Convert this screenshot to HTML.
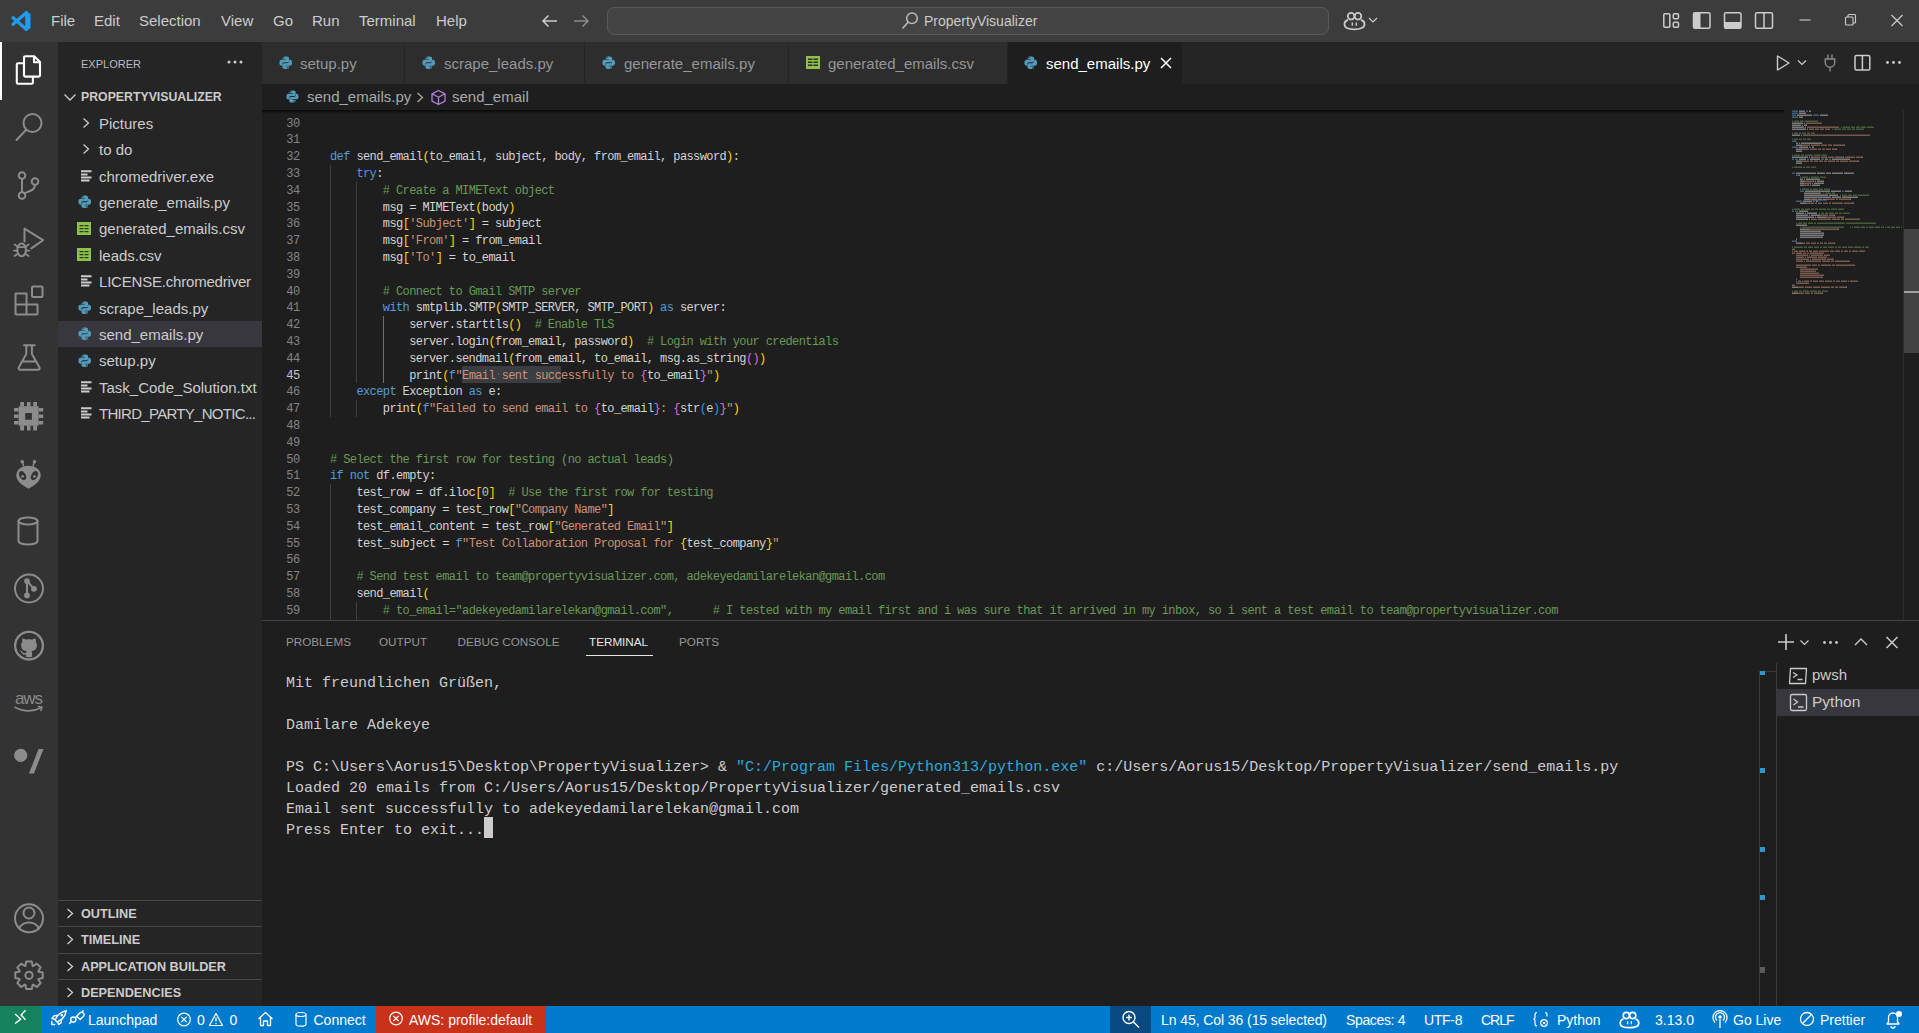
<!DOCTYPE html>
<html><head><meta charset="utf-8">
<style>
*{margin:0;padding:0;box-sizing:border-box}
html,body{width:1919px;height:1033px;overflow:hidden;background:#1e1e1e;font-family:"Liberation Sans",sans-serif;color:#cccccc}
.abs{position:absolute}
#title{left:0;top:0;width:1919px;height:42px;background:#3c3c3c}
#act{left:0;top:42px;width:58px;height:964px;background:#333333}
#side{left:58px;top:42px;width:204px;height:964px;background:#252526}
#tabs{left:262px;top:42px;width:1657px;height:42px;background:#252526}
#crumb{left:262px;top:84px;width:1657px;height:26px;background:#1e1e1e}
#editor{left:262px;top:110px;width:1657px;height:510px;background:#1e1e1e;overflow:hidden}
#panel{left:262px;top:620px;width:1657px;height:386px;background:#1e1e1e;border-top:1px solid #444}
#status{left:0;top:1006px;width:1919px;height:27px;background:#007acc;color:#fff}
.menu{font-size:15px;color:#cccccc;top:12px}
.tab{top:0;height:42px;background:#2d2d2d;border-right:1px solid #252526}
.tab .t{position:absolute;top:12.8px;font-size:15px;color:#969696;white-space:pre}
.code{font-family:"Liberation Mono",monospace;font-size:12px;letter-spacing:-0.6px;line-height:16.8px;white-space:pre;color:#d4d4d4}
.ln{font-family:"Liberation Mono",monospace;font-size:12px;letter-spacing:-0.6px;line-height:16.8px;color:#858585;text-align:right;white-space:pre}
.k{color:#569cd6}.c{color:#6a9955}.s{color:#ce9178}.n{color:#b5cea8}
.b1{color:#ffd700}.b2{color:#da70d6}.b3{color:#179fff}
.row{position:absolute;left:0;width:204px;height:26px;font-size:15px;color:#cccccc;white-space:pre}
.row .t{position:absolute;left:41px;top:4px}
.term{font-family:"Liberation Mono",monospace;font-size:15px;line-height:21px;white-space:pre;color:#cccccc}
.ptab{position:absolute;top:14px;font-size:11.7px;color:#969696;white-space:pre}
.st{position:absolute;top:6px;font-size:14px;color:#fff;white-space:pre}
</style></head><body>

<div id="title" class="abs">
  <svg class="abs" style="left:10px;top:10px" width="22" height="22" viewBox="0 0 22 22">
    <path d="M16.5 2.5 L3 14.3 M16.5 19.5 L3 7.7" stroke="#1f9cf0" stroke-width="3.2" stroke-linecap="round" fill="none"/>
    <path fill="#1f9cf0" d="M15.2 1.2 L20.5 3.7 V18.3 L15.2 20.8 Z"/>
  </svg>
  <span class="abs menu" style="left:51px">File</span>
  <span class="abs menu" style="left:94px">Edit</span>
  <span class="abs menu" style="left:139px">Selection</span>
  <span class="abs menu" style="left:221px">View</span>
  <span class="abs menu" style="left:273px">Go</span>
  <span class="abs menu" style="left:312px">Run</span>
  <span class="abs menu" style="left:359px">Terminal</span>
  <span class="abs menu" style="left:436px">Help</span>
  <svg class="abs" style="left:538px;top:12px" width="52" height="18" viewBox="0 0 52 18">
    <path d="M19 9 H5 M10.5 3.5 L5 9 L10.5 14.5" stroke="#cccccc" stroke-width="1.5" fill="none"/>
    <path d="M36 9 H50 M44.5 3.5 L50 9 L44.5 14.5" stroke="#8a8a8a" stroke-width="1.5" fill="none"/>
  </svg>
  <div class="abs" style="left:607px;top:7px;width:722px;height:28px;border:1px solid #585858;border-radius:7px;background:#444444"></div>
  <svg class="abs" style="left:900px;top:11px" width="20" height="20" viewBox="0 0 20 20">
    <circle cx="12" cy="7.2" r="5.3" stroke="#bbbbbb" stroke-width="1.5" fill="none"/>
    <path d="M8.3 11 L2.5 17.5" stroke="#bbbbbb" stroke-width="1.6" fill="none"/>
  </svg>
  <span class="abs" style="left:924px;top:13px;font-size:14px;color:#cccccc">PropertyVisualizer</span>
  <svg class="abs" style="left:1342px;top:6px" width="40" height="26" viewBox="0 0 40 26">
    <g stroke="#cccccc" fill="none">
      <circle cx="9.1" cy="10.2" r="3.3" stroke-width="1.7"/>
      <circle cx="16" cy="10.2" r="3.3" stroke-width="1.7"/>
      <path d="M6 14 c-2.5 .5 -3.5 2.5 -3.5 4.5 c0 3 4 4.8 10 4.8 s10 -1.8 10 -4.8 c0 -2 -1 -4 -3.5 -4.5" stroke-width="1.8"/>
    </g>
    <path d="M9.6 16.5 h1.4 v3.2 h-1.4z M13.6 16.5 h1.4 v3.2 h-1.4z" fill="#cccccc"/>
    <path d="M27 12 L31 16 L35 12" stroke="#cccccc" stroke-width="1.2" fill="none"/>
  </svg>
  <svg class="abs" style="left:1660px;top:8px" width="250" height="26" viewBox="0 0 250 26">
    <g stroke="#cccccc" stroke-width="1.5" fill="none">
      <rect x="3.8" y="5.8" width="6" height="13.4" rx="1"/>
      <rect x="13.3" y="5.8" width="5.2" height="5" rx="1.2"/>
      <rect x="13.3" y="14.2" width="5.2" height="5" rx="1.2"/>
      <rect x="33.5" y="4.8" width="16.5" height="15.5" rx="1.5"/>
      <rect x="64.5" y="4.8" width="16.5" height="15.5" rx="1.5"/>
      <rect x="95.5" y="4.8" width="17" height="15.5" rx="1.5"/>
      <path d="M104 5 v15"/>
      <path d="M139.5 12 h11" stroke-width="1.1"/>
      <rect x="185.5" y="9" width="7.5" height="8" rx="1" stroke-width="1.1"/>
      <path d="M188 9 v-1.5 a1 1 0 0 1 1 -1 h5.5 a1 1 0 0 1 1 1 v6.5 a1 1 0 0 1 -1 1 h-1.5" stroke-width="1.1"/>
      <path d="M231.5 7 L242.5 18 M242.5 7 L231.5 18" stroke-width="1.2"/>
    </g>
    <rect x="33.5" y="4.8" width="7" height="15.5" fill="#cccccc"/>
    <rect x="64.5" y="14" width="16.5" height="6.3" fill="#cccccc"/>
  </svg>
</div>

<svg class="abs" style="left:0;top:0" width="58" height="1006" viewBox="0 0 58 1006">
<rect x="0" y="42" width="58" height="964" fill="#333333"/>
<rect x="0" y="42" width="2" height="58" fill="#ffffff"/>
<g fill="none" stroke="#ffffff" stroke-width="2.1" stroke-linejoin="round">
 <path d="M25.3 56.2 h8.9 l5.8 5.8 v13.3 a1.3 1.3 0 0 1 -1.3 1.3 h-13.4 a1.3 1.3 0 0 1 -1.3 -1.3 v-17.8 a1.3 1.3 0 0 1 1.3 -1.3z"/>
 <path d="M34 56.2 v6 h6"/>
 <path d="M24 63.2 h-5.9 a1.3 1.3 0 0 0 -1.3 1.3 v18 a1.3 1.3 0 0 0 1.3 1.3 h13.5 a1.3 1.3 0 0 0 1.3 -1.3 v-5.6"/>
</g>
<g fill="none" stroke="#8c8c8c" stroke-width="2" stroke-linecap="round" stroke-linejoin="round">
 <!-- search -->
 <circle cx="32.5" cy="123" r="9"/>
 <path d="M26 130 L16.5 140"/>
 <!-- scm -->
 <circle cx="22" cy="175.5" r="3.3"/>
 <circle cx="22" cy="195.5" r="3.3"/>
 <circle cx="35" cy="181.5" r="3.3"/>
 <path d="M22 179 v13"/>
 <path d="M35 185 c0 5 -5 6 -10 8"/>
 <!-- run debug -->
 <path d="M24.5 241.4 V228.6 L43 240.2 L31.3 248.4"/>
 <ellipse cx="21.6" cy="249.9" rx="4.3" ry="6.3"/>
 <path d="M17.3 247.2 H25.9 M14.5 244.5 L17.6 246.5 M14 250.6 H17.3 M14.5 256 L17.6 254 M28.7 244.5 L25.6 246.5 M29.2 250.6 H25.9 M28.7 256 L25.6 254" stroke-width="1.7"/>
 <!-- extensions -->
 <path d="M15.5 293.5 h11 v11 h11 v9 a1 1 0 0 1 -1 1 h-20 a1 1 0 0 1 -1 -1 z M15.5 304.5 h11 v10 M26.5 304.5 v-11"/>
 <rect x="32" y="286.5" width="10.5" height="10.5" rx="1"/>
 <!-- flask -->
 <path d="M24 345.3 h10.8 M26.3 345.3 v8.7 l-7.6 13.5 a1.5 1.5 0 0 0 1.3 2.2 h18.2 a1.5 1.5 0 0 0 1.3 -2.2 l-7.6 -13.5 v-8.7 M23.4 361.4 h11.6"/>
 <!-- db -->
 <ellipse cx="28" cy="521" rx="9.5" ry="3.5"/>
 <path d="M18.5 521 v20 c0 2 4.2 3.5 9.5 3.5 s9.5 -1.5 9.5 -3.5 v-20"/>
 <!-- git graph circle -->
 <circle cx="29" cy="588.5" r="14"/>
 <circle cx="29" cy="594" r="13" stroke="none"/>
 <!-- github circle -->
 <circle cx="29" cy="645.7" r="13.8" stroke-width="2.4"/>
 <!-- account -->
 <circle cx="29" cy="918.3" r="14"/>
 <circle cx="29" cy="913" r="5.5"/>
 <path d="M19 928.5 c2 -4 5.5 -6 10 -6 s8 2 10 6"/>
 <!-- gear -->
 <circle cx="29" cy="975.3" r="3.6"/>
</g>
<g fill="#8c8c8c">
 <!-- chip -->
 <path fill-rule="evenodd" d="M18.6 406.2 h20 v19.5 h-20z M25.2 413 v6.8 h6.7 v-6.8z"/>
 <path d="M20.2 402 h3.8 v4.5 h-3.8z M27 402 h3.5 v4.5 h-3.5z M33.2 402 h3.8 v4.5 h-3.8z M20.2 425.5 h3.8 v5 h-3.8z M27 425.5 h3.5 v5 h-3.5z M33.2 425.5 h3.8 v5 h-3.8z M14 408 h4.6 v3.5 h-4.6z M14 414.6 h4.6 v3.5 h-4.6z M14 421 h4.6 v3.5 h-4.6z M38.6 408 h4.6 v3.5 h-4.6z M38.6 414.6 h4.6 v3.5 h-4.6z M38.6 421 h4.6 v3.5 h-4.6z"/>
 <!-- alien -->
 <path d="M28.5 465.7 C35.5 465.7 40.7 469.5 40.7 475.5 C40.7 481 34 486 28.5 488.7 C23 486 16.3 481 16.3 475.5 C16.3 469.5 21.5 465.7 28.5 465.7Z"/>
 <circle cx="22.2" cy="461.8" r="1.8"/><circle cx="34.5" cy="461.8" r="1.8"/>
 <!-- slash logo -->
 <circle cx="20.7" cy="755.4" r="6.6"/>
 <path d="M38.5 749 h5 l-9.5 24.5 h-5z"/>
</g>
<g stroke="#8c8c8c" stroke-width="1.5" fill="none">
 <path d="M22.5 462 L23.8 466.5 M34.2 462 L33 466.5"/>
</g>
<g fill="#333333">
 <ellipse cx="22.6" cy="475.6" rx="3.1" ry="4.8" transform="rotate(-28 22.6 475.6)"/>
 <ellipse cx="34.4" cy="475.6" rx="3.1" ry="4.8" transform="rotate(28 34.4 475.6)"/>
</g><g fill="#8c8c8c">
 <circle cx="22.6" cy="476.4" r="1.3"/><circle cx="34.4" cy="476.4" r="1.3"/>
</g>
<!-- git graph inner -->
<g stroke="#8c8c8c" stroke-width="2" fill="none" stroke-linecap="round">
 <path d="M27 581 V595.5 M27 581 L34 588.8"/>
</g>
<g fill="#8c8c8c"><circle cx="27" cy="581.1" r="2.9"/><circle cx="27" cy="595.4" r="2.9"/><circle cx="34" cy="588.8" r="2.9"/></g>
<!-- github cat -->
<g transform="translate(16.6 633.3) scale(1.55)"><circle cx="8" cy="8" r="7.4" fill="#8c8c8c"/><path fill="#333333" d="M8 0C3.58 0 0 3.58 0 8c0 3.54 2.29 6.53 5.47 7.59.4.07.55-.17.55-.38 0-.19-.01-.82-.01-1.49-2.01.37-2.53-.49-2.69-.94-.09-.23-.48-.94-.82-1.13-.28-.15-.68-.52-.01-.53.63-.01 1.08.58 1.23.82.72 1.21 1.87.87 2.33.66.07-.52.28-.87.51-1.07-1.78-.2-3.64-.89-3.64-3.95 0-.87.31-1.59.82-2.15-.08-.2-.36-1.02.08-2.12 0 0 .67-.21 2.2.82.64-.18 1.32-.27 2-.27.68 0 1.36.09 2 .27 1.53-1.04 2.2-.82 2.2-.82.44 1.1.16 1.92.08 2.12.51.56.82 1.27.82 2.15 0 3.07-1.87 3.75-3.65 3.95.29.25.54.73.54 1.48 0 1.07-.01 1.93-.01 2.2 0 .21.15.46.55.38A8.013 8.013 0 0016 8c0-4.42-3.58-8-8-8z"/></g>
<!-- aws -->
<text x="28.5" y="704" text-anchor="middle" font-family="Liberation Sans" font-size="17" fill="#8a8a8a" letter-spacing="-1">aws</text>
<path d="M14.5 707 Q28 714.5 41.5 707.5 M38 706.3 L42 707.2 L40.8 711" stroke="#8a8a8a" stroke-width="1.5" fill="none"/>
<!-- gear teeth -->
<path fill="none" stroke="#8c8c8c" stroke-width="2" stroke-linejoin="round" d="M38.55 971.71 L42.72 972.52 L42.72 978.08 L38.55 978.89 L38.29 979.51 L40.67 983.04 L36.74 986.97 L33.21 984.59 L32.59 984.85 L31.78 989.02 L26.22 989.02 L25.41 984.85 L24.79 984.59 L21.26 986.97 L17.33 983.04 L19.71 979.51 L19.45 978.89 L15.28 978.08 L15.28 972.52 L19.45 971.71 L19.71 971.09 L17.33 967.56 L21.26 963.63 L24.79 966.01 L25.41 965.75 L26.22 961.58 L31.78 961.58 L32.59 965.75 L33.21 966.01 L36.74 963.63 L40.67 967.56 L38.29 971.09Z"/>
</svg>
<div id="side" class="abs">
<span class="abs" style="left:23px;top:15.5px;font-size:11px;color:#bbbbbb">EXPLORER</span>
<svg class="abs" style="left:169px;top:18px" width="16" height="4" viewBox="0 0 16 4"><circle cx="2" cy="2" r="1.5" fill="#cccccc"/><circle cx="8" cy="2" r="1.5" fill="#cccccc"/><circle cx="14" cy="2" r="1.5" fill="#cccccc"/></svg>
<svg class="abs" style="left:5px;top:49px" width="14" height="12" viewBox="0 0 14 12"><path d="M1.5 3.5 L7 9 L12.5 3.5" stroke="#cccccc" stroke-width="1.3" fill="none"/></svg>
<span class="abs" style="left:23px;top:48px;font-size:12.3px;font-weight:bold;color:#cccccc">PROPERTYVISUALIZER</span>
<svg class="abs" style="left:23px;top:75.0px" width="10" height="12" viewBox="0 0 10 12"><path d="M2.5 1.5 L7.5 6 L2.5 10.5" stroke="#cccccc" stroke-width="1.3" fill="none"/></svg>
<span class="abs" style="left:41px;top:73.0px;font-size:15px;color:#cccccc;white-space:pre">Pictures</span>
<svg class="abs" style="left:23px;top:101.4px" width="10" height="12" viewBox="0 0 10 12"><path d="M2.5 1.5 L7.5 6 L2.5 10.5" stroke="#cccccc" stroke-width="1.3" fill="none"/></svg>
<span class="abs" style="left:41px;top:99.4px;font-size:15px;color:#cccccc;white-space:pre">to do</span>
<svg class="abs" style="left:22.9px;top:127.7px" width="11" height="12" viewBox="0 0 11 12"><path fill="#cccccc" d="M0 0.3h10.5v2h-10.5z M0 3.4h6.5v2h-6.5z M0 6.5h10.5v2h-10.5z M0 9.6h8.5v2h-8.5z"/></svg>
<span class="abs" style="left:41px;top:125.7px;font-size:15px;color:#cccccc;white-space:pre">chromedriver.exe</span>
<svg class="abs" style="left:19.5px;top:153.4px" width="13.5" height="13.5" viewBox="0 0 16 16"><path fill="#519aba" fill-rule="evenodd" d="M7.9 0.5 C4.2 0.5 4.4 2.1 4.4 2.1 V3.8 H8 V4.5 H3 C3 4.5 0.5 4.2 0.5 7.9 C0.5 11.6 2.7 11.5 2.7 11.5 H4 V9.7 C4 9.7 3.9 7.5 6.2 7.5 H9.8 C9.8 7.5 11.9 7.5 11.9 5.5 V2.3 C11.9 2.3 12.2 0.5 7.9 0.5Z M5.9 1.3 a.75 .75 0 1 0 0 1.5 a.75 .75 0 1 0 0 -1.5z"/><path fill="#519aba" fill-rule="evenodd" d="M8.1 15.5 C11.8 15.5 11.6 13.9 11.6 13.9 V12.2 H8 V11.5 H13 C13 11.5 15.5 11.8 15.5 8.1 C15.5 4.4 13.3 4.5 13.3 4.5 H12 V6.3 C12 6.3 12.1 8.5 9.8 8.5 H6.2 C6.2 8.5 4.1 8.5 4.1 10.5 V13.7 C4.1 13.7 3.8 15.5 8.1 15.5Z M10.1 13.2 a.75 .75 0 1 0 0 1.5 a.75 .75 0 1 0 0 -1.5z"/></svg>
<span class="abs" style="left:41px;top:152.1px;font-size:15px;color:#cccccc;white-space:pre">generate_emails.py</span>
<svg class="abs" style="left:19px;top:179.9px" width="14" height="13" viewBox="0 0 14 13"><rect x="0" y="0" width="14" height="13" fill="#8dc149"/><path fill="#2a3a1a" d="M2.5 3h4v1.3h-4z M7.5 3h4v1.3h-4z M2.5 6h4v1.3h-4z M7.5 6h4v1.3h-4z M2.5 9h4v1.3h-4z M7.5 9h4v1.3h-4z"/></svg>
<span class="abs" style="left:41px;top:178.4px;font-size:15px;color:#cccccc;white-space:pre">generated_emails.csv</span>
<svg class="abs" style="left:19px;top:206.3px" width="14" height="13" viewBox="0 0 14 13"><rect x="0" y="0" width="14" height="13" fill="#8dc149"/><path fill="#2a3a1a" d="M2.5 3h4v1.3h-4z M7.5 3h4v1.3h-4z M2.5 6h4v1.3h-4z M7.5 6h4v1.3h-4z M2.5 9h4v1.3h-4z M7.5 9h4v1.3h-4z"/></svg>
<span class="abs" style="left:41px;top:204.8px;font-size:15px;color:#cccccc;white-space:pre">leads.csv</span>
<svg class="abs" style="left:22.9px;top:233.2px" width="11" height="12" viewBox="0 0 11 12"><path fill="#cccccc" d="M0 0.3h10.5v2h-10.5z M0 3.4h6.5v2h-6.5z M0 6.5h10.5v2h-10.5z M0 9.6h8.5v2h-8.5z"/></svg>
<span class="abs" style="left:41px;top:231.2px;font-size:15px;color:#cccccc;white-space:pre;letter-spacing:-0.2px">LICENSE.chromedriver</span>
<svg class="abs" style="left:19.5px;top:258.8px" width="13.5" height="13.5" viewBox="0 0 16 16"><path fill="#519aba" fill-rule="evenodd" d="M7.9 0.5 C4.2 0.5 4.4 2.1 4.4 2.1 V3.8 H8 V4.5 H3 C3 4.5 0.5 4.2 0.5 7.9 C0.5 11.6 2.7 11.5 2.7 11.5 H4 V9.7 C4 9.7 3.9 7.5 6.2 7.5 H9.8 C9.8 7.5 11.9 7.5 11.9 5.5 V2.3 C11.9 2.3 12.2 0.5 7.9 0.5Z M5.9 1.3 a.75 .75 0 1 0 0 1.5 a.75 .75 0 1 0 0 -1.5z"/><path fill="#519aba" fill-rule="evenodd" d="M8.1 15.5 C11.8 15.5 11.6 13.9 11.6 13.9 V12.2 H8 V11.5 H13 C13 11.5 15.5 11.8 15.5 8.1 C15.5 4.4 13.3 4.5 13.3 4.5 H12 V6.3 C12 6.3 12.1 8.5 9.8 8.5 H6.2 C6.2 8.5 4.1 8.5 4.1 10.5 V13.7 C4.1 13.7 3.8 15.5 8.1 15.5Z M10.1 13.2 a.75 .75 0 1 0 0 1.5 a.75 .75 0 1 0 0 -1.5z"/></svg>
<span class="abs" style="left:41px;top:257.5px;font-size:15px;color:#cccccc;white-space:pre">scrape_leads.py</span>
<div class="abs" style="left:0;top:278.9px;width:204px;height:26.5px;background:#37373d"></div>
<svg class="abs" style="left:19.5px;top:285.2px" width="13.5" height="13.5" viewBox="0 0 16 16"><path fill="#519aba" fill-rule="evenodd" d="M7.9 0.5 C4.2 0.5 4.4 2.1 4.4 2.1 V3.8 H8 V4.5 H3 C3 4.5 0.5 4.2 0.5 7.9 C0.5 11.6 2.7 11.5 2.7 11.5 H4 V9.7 C4 9.7 3.9 7.5 6.2 7.5 H9.8 C9.8 7.5 11.9 7.5 11.9 5.5 V2.3 C11.9 2.3 12.2 0.5 7.9 0.5Z M5.9 1.3 a.75 .75 0 1 0 0 1.5 a.75 .75 0 1 0 0 -1.5z"/><path fill="#519aba" fill-rule="evenodd" d="M8.1 15.5 C11.8 15.5 11.6 13.9 11.6 13.9 V12.2 H8 V11.5 H13 C13 11.5 15.5 11.8 15.5 8.1 C15.5 4.4 13.3 4.5 13.3 4.5 H12 V6.3 C12 6.3 12.1 8.5 9.8 8.5 H6.2 C6.2 8.5 4.1 8.5 4.1 10.5 V13.7 C4.1 13.7 3.8 15.5 8.1 15.5Z M10.1 13.2 a.75 .75 0 1 0 0 1.5 a.75 .75 0 1 0 0 -1.5z"/></svg>
<span class="abs" style="left:41px;top:283.9px;font-size:15px;color:#cccccc;white-space:pre">send_emails.py</span>
<svg class="abs" style="left:19.5px;top:311.5px" width="13.5" height="13.5" viewBox="0 0 16 16"><path fill="#519aba" fill-rule="evenodd" d="M7.9 0.5 C4.2 0.5 4.4 2.1 4.4 2.1 V3.8 H8 V4.5 H3 C3 4.5 0.5 4.2 0.5 7.9 C0.5 11.6 2.7 11.5 2.7 11.5 H4 V9.7 C4 9.7 3.9 7.5 6.2 7.5 H9.8 C9.8 7.5 11.9 7.5 11.9 5.5 V2.3 C11.9 2.3 12.2 0.5 7.9 0.5Z M5.9 1.3 a.75 .75 0 1 0 0 1.5 a.75 .75 0 1 0 0 -1.5z"/><path fill="#519aba" fill-rule="evenodd" d="M8.1 15.5 C11.8 15.5 11.6 13.9 11.6 13.9 V12.2 H8 V11.5 H13 C13 11.5 15.5 11.8 15.5 8.1 C15.5 4.4 13.3 4.5 13.3 4.5 H12 V6.3 C12 6.3 12.1 8.5 9.8 8.5 H6.2 C6.2 8.5 4.1 8.5 4.1 10.5 V13.7 C4.1 13.7 3.8 15.5 8.1 15.5Z M10.1 13.2 a.75 .75 0 1 0 0 1.5 a.75 .75 0 1 0 0 -1.5z"/></svg>
<span class="abs" style="left:41px;top:310.2px;font-size:15px;color:#cccccc;white-space:pre">setup.py</span>
<svg class="abs" style="left:22.9px;top:338.6px" width="11" height="12" viewBox="0 0 11 12"><path fill="#cccccc" d="M0 0.3h10.5v2h-10.5z M0 3.4h6.5v2h-6.5z M0 6.5h10.5v2h-10.5z M0 9.6h8.5v2h-8.5z"/></svg>
<span class="abs" style="left:41px;top:336.6px;font-size:15px;color:#cccccc;white-space:pre">Task_Code_Solution.txt</span>
<svg class="abs" style="left:22.9px;top:365.0px" width="11" height="12" viewBox="0 0 11 12"><path fill="#cccccc" d="M0 0.3h10.5v2h-10.5z M0 3.4h6.5v2h-6.5z M0 6.5h10.5v2h-10.5z M0 9.6h8.5v2h-8.5z"/></svg>
<span class="abs" style="left:41px;top:363.0px;font-size:15px;color:#cccccc;white-space:pre;letter-spacing:-0.7px">THIRD_PARTY_NOTIC...</span>
<div class="abs" style="left:0;top:858.0px;width:204px;height:1px;background:#474747"></div>
<svg class="abs" style="left:7px;top:865.0px" width="10" height="13" viewBox="0 0 10 13"><path d="M2.5 2 L7.5 6.5 L2.5 11" stroke="#cccccc" stroke-width="1.3" fill="none"/></svg>
<span class="abs" style="left:23px;top:865.0px;font-size:12.7px;font-weight:bold;color:#cccccc">OUTLINE</span>
<div class="abs" style="left:0;top:884.3px;width:204px;height:1px;background:#474747"></div>
<svg class="abs" style="left:7px;top:891.3px" width="10" height="13" viewBox="0 0 10 13"><path d="M2.5 2 L7.5 6.5 L2.5 11" stroke="#cccccc" stroke-width="1.3" fill="none"/></svg>
<span class="abs" style="left:23px;top:891.3px;font-size:12.7px;font-weight:bold;color:#cccccc">TIMELINE</span>
<div class="abs" style="left:0;top:911.0px;width:204px;height:1px;background:#474747"></div>
<svg class="abs" style="left:7px;top:918.0px" width="10" height="13" viewBox="0 0 10 13"><path d="M2.5 2 L7.5 6.5 L2.5 11" stroke="#cccccc" stroke-width="1.3" fill="none"/></svg>
<span class="abs" style="left:23px;top:918.0px;font-size:12.7px;font-weight:bold;color:#cccccc">APPLICATION BUILDER</span>
<div class="abs" style="left:0;top:937.3px;width:204px;height:1px;background:#474747"></div>
<svg class="abs" style="left:7px;top:944.3px" width="10" height="13" viewBox="0 0 10 13"><path d="M2.5 2 L7.5 6.5 L2.5 11" stroke="#cccccc" stroke-width="1.3" fill="none"/></svg>
<span class="abs" style="left:23px;top:944.3px;font-size:12.7px;font-weight:bold;color:#cccccc">DEPENDENCIES</span>
</div>
<div id="tabs" class="abs">
  <div class="abs tab" style="left:0;width:143px"><svg class="abs" style="left:17px;top:13.5px" width="13.5" height="13.5" viewBox="0 0 16 16"><path fill="#519aba" fill-rule="evenodd" d="M7.9 0.5 C4.2 0.5 4.4 2.1 4.4 2.1 V3.8 H8 V4.5 H3 C3 4.5 0.5 4.2 0.5 7.9 C0.5 11.6 2.7 11.5 2.7 11.5 H4 V9.7 C4 9.7 3.9 7.5 6.2 7.5 H9.8 C9.8 7.5 11.9 7.5 11.9 5.5 V2.3 C11.9 2.3 12.2 0.5 7.9 0.5Z M5.9 1.3 a.75 .75 0 1 0 0 1.5 a.75 .75 0 1 0 0 -1.5z"/><path fill="#519aba" fill-rule="evenodd" d="M8.1 15.5 C11.8 15.5 11.6 13.9 11.6 13.9 V12.2 H8 V11.5 H13 C13 11.5 15.5 11.8 15.5 8.1 C15.5 4.4 13.3 4.5 13.3 4.5 H12 V6.3 C12 6.3 12.1 8.5 9.8 8.5 H6.2 C6.2 8.5 4.1 8.5 4.1 10.5 V13.7 C4.1 13.7 3.8 15.5 8.1 15.5Z M10.1 13.2 a.75 .75 0 1 0 0 1.5 a.75 .75 0 1 0 0 -1.5z"/></svg><span class="t" style="left:38px">setup.py</span></div>
  <div class="abs tab" style="left:143px;width:180px"><svg class="abs" style="left:17px;top:13.5px" width="13.5" height="13.5" viewBox="0 0 16 16"><path fill="#519aba" fill-rule="evenodd" d="M7.9 0.5 C4.2 0.5 4.4 2.1 4.4 2.1 V3.8 H8 V4.5 H3 C3 4.5 0.5 4.2 0.5 7.9 C0.5 11.6 2.7 11.5 2.7 11.5 H4 V9.7 C4 9.7 3.9 7.5 6.2 7.5 H9.8 C9.8 7.5 11.9 7.5 11.9 5.5 V2.3 C11.9 2.3 12.2 0.5 7.9 0.5Z M5.9 1.3 a.75 .75 0 1 0 0 1.5 a.75 .75 0 1 0 0 -1.5z"/><path fill="#519aba" fill-rule="evenodd" d="M8.1 15.5 C11.8 15.5 11.6 13.9 11.6 13.9 V12.2 H8 V11.5 H13 C13 11.5 15.5 11.8 15.5 8.1 C15.5 4.4 13.3 4.5 13.3 4.5 H12 V6.3 C12 6.3 12.1 8.5 9.8 8.5 H6.2 C6.2 8.5 4.1 8.5 4.1 10.5 V13.7 C4.1 13.7 3.8 15.5 8.1 15.5Z M10.1 13.2 a.75 .75 0 1 0 0 1.5 a.75 .75 0 1 0 0 -1.5z"/></svg><span class="t" style="left:39px">scrape_leads.py</span></div>
  <div class="abs tab" style="left:323px;width:204px"><svg class="abs" style="left:17px;top:13.5px" width="13.5" height="13.5" viewBox="0 0 16 16"><path fill="#519aba" fill-rule="evenodd" d="M7.9 0.5 C4.2 0.5 4.4 2.1 4.4 2.1 V3.8 H8 V4.5 H3 C3 4.5 0.5 4.2 0.5 7.9 C0.5 11.6 2.7 11.5 2.7 11.5 H4 V9.7 C4 9.7 3.9 7.5 6.2 7.5 H9.8 C9.8 7.5 11.9 7.5 11.9 5.5 V2.3 C11.9 2.3 12.2 0.5 7.9 0.5Z M5.9 1.3 a.75 .75 0 1 0 0 1.5 a.75 .75 0 1 0 0 -1.5z"/><path fill="#519aba" fill-rule="evenodd" d="M8.1 15.5 C11.8 15.5 11.6 13.9 11.6 13.9 V12.2 H8 V11.5 H13 C13 11.5 15.5 11.8 15.5 8.1 C15.5 4.4 13.3 4.5 13.3 4.5 H12 V6.3 C12 6.3 12.1 8.5 9.8 8.5 H6.2 C6.2 8.5 4.1 8.5 4.1 10.5 V13.7 C4.1 13.7 3.8 15.5 8.1 15.5Z M10.1 13.2 a.75 .75 0 1 0 0 1.5 a.75 .75 0 1 0 0 -1.5z"/></svg><span class="t" style="left:39px">generate_emails.py</span></div>
  <div class="abs tab" style="left:527px;width:219px"><svg class="abs" style="left:17px;top:14px" width="14" height="13" viewBox="0 0 14 13"><rect x="0" y="0" width="14" height="13" fill="#8dc149"/><path fill="#2d2d2d" d="M2 2.5 h4.5 v1.5 h-4.5z M7.5 2.5 h4.5 v1.5 h-4.5z M2 5.5 h4.5 v1.5 h-4.5z M7.5 5.5 h4.5 v1.5 h-4.5z M2 8.5 h4.5 v1.5 h-4.5z M7.5 8.5 h4.5 v1.5 h-4.5z"/></svg><span class="t" style="left:39px">generated_emails.csv</span></div>
  <div class="abs tab" style="left:746px;width:174px;background:#1e1e1e;border-right:none"><svg class="abs" style="left:16px;top:13.5px" width="13.5" height="13.5" viewBox="0 0 16 16"><path fill="#519aba" fill-rule="evenodd" d="M7.9 0.5 C4.2 0.5 4.4 2.1 4.4 2.1 V3.8 H8 V4.5 H3 C3 4.5 0.5 4.2 0.5 7.9 C0.5 11.6 2.7 11.5 2.7 11.5 H4 V9.7 C4 9.7 3.9 7.5 6.2 7.5 H9.8 C9.8 7.5 11.9 7.5 11.9 5.5 V2.3 C11.9 2.3 12.2 0.5 7.9 0.5Z M5.9 1.3 a.75 .75 0 1 0 0 1.5 a.75 .75 0 1 0 0 -1.5z"/><path fill="#519aba" fill-rule="evenodd" d="M8.1 15.5 C11.8 15.5 11.6 13.9 11.6 13.9 V12.2 H8 V11.5 H13 C13 11.5 15.5 11.8 15.5 8.1 C15.5 4.4 13.3 4.5 13.3 4.5 H12 V6.3 C12 6.3 12.1 8.5 9.8 8.5 H6.2 C6.2 8.5 4.1 8.5 4.1 10.5 V13.7 C4.1 13.7 3.8 15.5 8.1 15.5Z M10.1 13.2 a.75 .75 0 1 0 0 1.5 a.75 .75 0 1 0 0 -1.5z"/></svg><span class="t" style="left:38px;color:#ffffff">send_emails.py</span>
    <svg class="abs" style="left:151px;top:14px" width="14" height="14" viewBox="0 0 14 14"><path d="M2 2 L12 12 M12 2 L2 12" stroke="#ffffff" stroke-width="1.5"/></svg></div>
  <svg class="abs" style="left:1510px;top:10px" width="140" height="22" viewBox="0 0 140 22">
    <path d="M5.5 4 L17 11 L5.5 18 Z" stroke="#cccccc" stroke-width="1.4" fill="none" stroke-linejoin="round"/>
    <path d="M26 8.5 L30 12.5 L34 8.5" stroke="#cccccc" stroke-width="1.2" fill="none"/>
    <path d="M56 2.5 v4.5 M60 2.5 v4.5 M53.3 7 h9.4 v3.5 a4.7 4.7 0 0 1 -9.4 0 z M58 15 v4.5" stroke="#8a8a8a" stroke-width="1.4" fill="none"/>
    <rect x="83" y="3.5" width="14.8" height="14.5" rx="1.5" stroke="#cccccc" stroke-width="1.5" fill="none"/>
    <path d="M90.4 3.5 v14.5" stroke="#cccccc" stroke-width="1.5"/>
    <circle cx="115.5" cy="10.5" r="1.4" fill="#cccccc"/><circle cx="121.5" cy="10.5" r="1.4" fill="#cccccc"/><circle cx="127.5" cy="10.5" r="1.4" fill="#cccccc"/>
  </svg>
</div>
<div id="crumb" class="abs">
  <svg class="abs" style="left:24px;top:6px" width="13" height="13" viewBox="0 0 16 16"><path fill="#519aba" fill-rule="evenodd" d="M7.9 0.5 C4.2 0.5 4.4 2.1 4.4 2.1 V3.8 H8 V4.5 H3 C3 4.5 0.5 4.2 0.5 7.9 C0.5 11.6 2.7 11.5 2.7 11.5 H4 V9.7 C4 9.7 3.9 7.5 6.2 7.5 H9.8 C9.8 7.5 11.9 7.5 11.9 5.5 V2.3 C11.9 2.3 12.2 0.5 7.9 0.5Z M5.9 1.3 a.75 .75 0 1 0 0 1.5 a.75 .75 0 1 0 0 -1.5z"/><path fill="#519aba" fill-rule="evenodd" d="M8.1 15.5 C11.8 15.5 11.6 13.9 11.6 13.9 V12.2 H8 V11.5 H13 C13 11.5 15.5 11.8 15.5 8.1 C15.5 4.4 13.3 4.5 13.3 4.5 H12 V6.3 C12 6.3 12.1 8.5 9.8 8.5 H6.2 C6.2 8.5 4.1 8.5 4.1 10.5 V13.7 C4.1 13.7 3.8 15.5 8.1 15.5Z M10.1 13.2 a.75 .75 0 1 0 0 1.5 a.75 .75 0 1 0 0 -1.5z"/></svg>
  <span class="abs" style="left:45px;top:4px;font-size:15px;color:#a9a9a9">send_emails.py</span>
  <svg class="abs" style="left:153px;top:7px" width="10" height="13" viewBox="0 0 10 13"><path d="M2.5 2 L7.5 6.5 L2.5 11" stroke="#a9a9a9" stroke-width="1.3" fill="none"/></svg>
  <svg class="abs" style="left:168px;top:5px" width="17" height="17" viewBox="0 0 17 17"><path d="M8.5 1.5 L15 4.8 V12.2 L8.5 15.5 L2 12.2 V4.8 Z M2 4.8 L8.5 8.3 L15 4.8 M8.5 8.3 V15.5" stroke="#b180d7" stroke-width="1.3" fill="none" stroke-linejoin="round"/></svg>
  <span class="abs" style="left:190px;top:4px;font-size:15px;color:#a9a9a9">send_email</span>
</div>
<div id="editor" class="abs">
  <div class="abs" style="left:68px;top:54.8px;width:1px;height:252.0px;background:#404040"></div>
<div class="abs" style="left:68px;top:374.0px;width:1px;height:168.0px;background:#404040"></div>
<div class="abs" style="left:94.4px;top:71.6px;width:1px;height:201.6px;background:#404040"></div>
<div class="abs" style="left:94.4px;top:290.0px;width:1px;height:16.8px;background:#404040"></div>
<div class="abs" style="left:120.8px;top:206.0px;width:1px;height:67.2px;background:#707070"></div>
<div class="abs" style="left:94.4px;top:491.6px;width:1px;height:50.4px;background:#404040"></div>
<div class="abs" style="left:200px;top:256.4px;width:99px;height:16.8px;background:#3a3d41"></div>
<div class="abs" style="left:235.5px;top:263px;width:1.6px;height:1.6px;background:#6a6a6a"></div><div class="abs" style="left:261.9px;top:263px;width:1.6px;height:1.6px;background:#6a6a6a"></div>
<div class="abs" style="left:1641px;top:0;width:1px;height:510px;background:#2c2c2c"></div>
  <div class="abs" style="left:1642px;top:119px;width:15px;height:124px;background:#424242"></div>
  <div class="abs" style="left:1642px;top:180.5px;width:15px;height:2px;background:#a0a0a0"></div>
<div class="abs ln" style="left:0;top:5.6px;width:37.5px">30
31
32
33
34
35
36
37
38
39
40
41
42
43
44
<span style="color:#c6c6c6">45</span>
46
47
48
49
50
51
52
53
54
55
56
57
58
59</div>
  <div class="abs code" id="codeblk" style="left:68px;top:5.6px">

<span class="k">def</span> send_email<span class="b1">(</span>to_email, subject, body, from_email, password<span class="b1">)</span>:
    <span class="k">try</span>:
        <span class="c"># Create a MIMEText object</span>
        msg = MIMEText<span class="b1">(</span>body<span class="b1">)</span>
        msg<span class="b1">[</span><span class="s">&#x27;Subject&#x27;</span><span class="b1">]</span> = subject
        msg<span class="b1">[</span><span class="s">&#x27;From&#x27;</span><span class="b1">]</span> = from_email
        msg<span class="b1">[</span><span class="s">&#x27;To&#x27;</span><span class="b1">]</span> = to_email

        <span class="c"># Connect to Gmail SMTP server</span>
        <span class="k">with</span> smtplib.SMTP<span class="b1">(</span>SMTP_SERVER, SMTP_PORT<span class="b1">)</span> <span class="k">as</span> server:
            server.starttls<span class="b1">()</span>  <span class="c"># Enable TLS</span>
            server.login<span class="b1">(</span>from_email, password<span class="b1">)</span>  <span class="c"># Login with your credentials</span>
            server.sendmail<span class="b1">(</span>from_email, to_email, msg.as_string<span class="b2">()</span><span class="b1">)</span>
            print<span class="b1">(</span><span class="k">f</span><span class="s">&quot;Email sent successfully to </span><span class="b2">{</span>to_email<span class="b2">}</span><span class="s">&quot;</span><span class="b1">)</span>
    <span class="k">except</span> Exception <span class="k">as</span> e:
        print<span class="b1">(</span><span class="k">f</span><span class="s">&quot;Failed to send email to </span><span class="b2">{</span>to_email<span class="b2">}</span><span class="s">: </span><span class="b2">{</span>str<span class="b3">(</span>e<span class="b3">)</span><span class="b2">}</span><span class="s">&quot;</span><span class="b1">)</span>


<span class="c"># Select the first row for testing (no actual leads)</span>
<span class="k">if</span> <span class="k">not</span> df.empty:
    test_row = df.iloc<span class="b1">[</span><span class="n">0</span><span class="b1">]</span>  <span class="c"># Use the first row for testing</span>
    test_company = test_row<span class="b1">[</span><span class="s">&quot;Company Name&quot;</span><span class="b1">]</span>
    test_email_content = test_row<span class="b1">[</span><span class="s">&quot;Generated Email&quot;</span><span class="b1">]</span>
    test_subject = <span class="k">f</span><span class="s">&quot;Test Collaboration Proposal for </span><span class="b1">{</span>test_company<span class="b1">}</span><span class="s">&quot;</span>

    <span class="c"># Send test email to team@propertyvisualizer.com, adekeyedamilarelekan@gmail.com</span>
    send_email<span class="b1">(</span>
        <span class="c"># to_email=&quot;adekeyedamilarelekan@gmail.com&quot;,      # I tested with my email first and i was sure that it arrived in my inbox, so i sent a test email to team@propertyvisualizer.com</span></div>
</div>
<div class="abs" style="left:262px;top:110px;width:1522px;height:4px;background:linear-gradient(#000000b0,#00000000)"></div>
<div id="minimap"><div class="abs" style="left:1812px;top:198.6px;width:15px;height:2px;background:#264f78"></div><svg class="abs" style="left:0;top:0" width="1902" height="1033" viewBox="0 0 1902 1033"><g opacity="0.5"><path fill="#569cd6" d="M1792 110.6h6v1.5h-6zM1806 110.6h2v1.5h-2zM1792 112.6h6v1.5h-6zM1792 114.6h4v1.5h-4zM1813 114.6h6v1.5h-6zM1792 116.6h6v1.5h-6zM1792 140.6h3v1.5h-3zM1792 146.6h6v1.5h-6zM1809 146.6h2v1.5h-2zM1792 158.6h2v1.5h-2zM1795 158.6h3v1.5h-3zM1807 158.6h2v1.5h-2zM1821 158.6h3v1.5h-3zM1829 158.6h2v1.5h-2zM1792 172.6h3v1.5h-3zM1796 174.6h3v1.5h-3zM1800 190.6h4v1.5h-4zM1842 190.6h2v1.5h-2zM1796 200.6h6v1.5h-6zM1813 200.6h2v1.5h-2zM1792 210.6h2v1.5h-2zM1795 210.6h3v1.5h-3zM1792 240.6h4v1.5h-4z"/><path fill="#6a9955" d="M1792 120.6h1v1.5h-1zM1794 120.6h5v1.5h-5zM1800 120.6h4v1.5h-4zM1805 120.6h13v1.5h-13zM1841 126.6h1v1.5h-1zM1843 126.6h7v1.5h-7zM1851 126.6h4v1.5h-4zM1856 126.6h4v1.5h-4zM1861 126.6h5v1.5h-5zM1867 126.6h7v1.5h-7zM1832 128.6h1v1.5h-1zM1834 128.6h7v1.5h-7zM1842 128.6h4v1.5h-4zM1847 128.6h4v1.5h-4zM1852 128.6h3v1.5h-3zM1856 128.6h8v1.5h-8zM1792 132.6h1v1.5h-1zM1794 132.6h4v1.5h-4zM1799 132.6h2v1.5h-2zM1802 132.6h4v1.5h-4zM1807 132.6h3v1.5h-3zM1811 132.6h4v1.5h-4zM1792 138.6h1v1.5h-1zM1794 138.6h4v1.5h-4zM1799 138.6h3v1.5h-3zM1803 138.6h3v1.5h-3zM1807 138.6h4v1.5h-4zM1792 154.6h1v1.5h-1zM1794 154.6h6v1.5h-6zM1801 154.6h3v1.5h-3zM1805 154.6h8v1.5h-8zM1814 154.6h7v1.5h-7zM1822 154.6h5v1.5h-5zM1792 166.6h1v1.5h-1zM1794 166.6h8v1.5h-8zM1803 166.6h2v1.5h-2zM1806 166.6h4v1.5h-4zM1811 166.6h5v1.5h-5zM1800 176.6h1v1.5h-1zM1802 176.6h6v1.5h-6zM1809 176.6h1v1.5h-1zM1811 176.6h8v1.5h-8zM1820 176.6h6v1.5h-6zM1800 188.6h1v1.5h-1zM1802 188.6h7v1.5h-7zM1810 188.6h2v1.5h-2zM1813 188.6h5v1.5h-5zM1819 188.6h4v1.5h-4zM1824 188.6h6v1.5h-6zM1823 192.6h1v1.5h-1zM1825 192.6h6v1.5h-6zM1832 192.6h3v1.5h-3zM1840 194.6h1v1.5h-1zM1842 194.6h5v1.5h-5zM1848 194.6h4v1.5h-4zM1853 194.6h4v1.5h-4zM1858 194.6h11v1.5h-11zM1792 208.6h1v1.5h-1zM1794 208.6h6v1.5h-6zM1801 208.6h3v1.5h-3zM1805 208.6h5v1.5h-5zM1811 208.6h3v1.5h-3zM1815 208.6h3v1.5h-3zM1819 208.6h7v1.5h-7zM1827 208.6h3v1.5h-3zM1831 208.6h6v1.5h-6zM1838 208.6h6v1.5h-6zM1819 212.6h1v1.5h-1zM1821 212.6h3v1.5h-3zM1825 212.6h3v1.5h-3zM1829 212.6h5v1.5h-5zM1835 212.6h3v1.5h-3zM1839 212.6h3v1.5h-3zM1843 212.6h7v1.5h-7zM1796 222.6h1v1.5h-1zM1798 222.6h4v1.5h-4zM1803 222.6h4v1.5h-4zM1808 222.6h5v1.5h-5zM1814 222.6h2v1.5h-2zM1817 222.6h28v1.5h-28zM1846 222.6h30v1.5h-30zM1800 226.6h1v1.5h-1zM1802 226.6h42v1.5h-42zM1850 226.6h1v1.5h-1zM1852 226.6h1v1.5h-1zM1854 226.6h6v1.5h-6zM1861 226.6h4v1.5h-4zM1866 226.6h2v1.5h-2zM1869 226.6h5v1.5h-5zM1875 226.6h5v1.5h-5zM1881 226.6h3v1.5h-3zM1885 226.6h1v1.5h-1zM1887 226.6h3v1.5h-3zM1891 226.6h4v1.5h-4zM1896 226.6h4v1.5h-4zM1901 226.6h2v1.5h-2zM1904 226.6h7v1.5h-7zM1912 226.6h2v1.5h-2zM1915 226.6h2v1.5h-2zM1918 226.6h6v1.5h-6zM1925 226.6h2v1.5h-2zM1928 226.6h1v1.5h-1zM1930 226.6h4v1.5h-4zM1935 226.6h1v1.5h-1zM1937 226.6h4v1.5h-4zM1942 226.6h5v1.5h-5zM1948 226.6h2v1.5h-2zM1951 226.6h27v1.5h-27zM1792 246.6h1v1.5h-1zM1794 246.6h9v1.5h-9zM1804 246.6h3v1.5h-3zM1808 246.6h5v1.5h-5zM1814 246.6h5v1.5h-5zM1820 246.6h2v1.5h-2zM1823 246.6h4v1.5h-4zM1828 246.6h6v1.5h-6zM1835 246.6h2v1.5h-2zM1838 246.6h3v1.5h-3zM1842 246.6h5v1.5h-5zM1848 246.6h5v1.5h-5zM1854 246.6h7v1.5h-7zM1862 246.6h2v1.5h-2zM1865 246.6h4v1.5h-4zM1792 290.6h1v1.5h-1zM1794 290.6h4v1.5h-4zM1799 290.6h3v1.5h-3zM1803 290.6h6v1.5h-6zM1810 290.6h7v1.5h-7zM1818 290.6h3v1.5h-3zM1822 290.6h6v1.5h-6z"/><path fill="#ce9178" d="M1806 122.6h16v1.5h-16zM1807 126.6h32v1.5h-32zM1809 128.6h5v1.5h-5zM1815 128.6h4v1.5h-4zM1820 128.6h4v1.5h-4zM1825 128.6h5v1.5h-5zM1803 134.6h67v1.5h-67zM1802 144.6h8v1.5h-8zM1811 144.6h9v1.5h-9zM1821 144.6h6v1.5h-6zM1828 144.6h4v1.5h-4zM1833 144.6h11v1.5h-11zM1802 148.6h7v1.5h-7zM1810 148.6h7v1.5h-7zM1818 148.6h3v1.5h-3zM1822 148.6h3v1.5h-3zM1826 148.6h5v1.5h-5zM1832 148.6h4v1.5h-4zM1812 156.6h8v1.5h-8zM1821 156.6h5v1.5h-5zM1828 156.6h6v1.5h-6zM1835 156.6h8v1.5h-8zM1845 156.6h10v1.5h-10zM1856 156.6h6v1.5h-6zM1802 160.6h7v1.5h-7zM1810 160.6h3v1.5h-3zM1814 160.6h4v1.5h-4zM1819 160.6h4v1.5h-4zM1824 160.6h3v1.5h-3zM1828 160.6h7v1.5h-7zM1836 160.6h3v1.5h-3zM1840 160.6h8v1.5h-8zM1849 160.6h9v1.5h-9zM1804 180.6h9v1.5h-9zM1804 182.6h6v1.5h-6zM1804 184.6h4v1.5h-4zM1810 198.6h7v1.5h-7zM1818 198.6h4v1.5h-4zM1823 198.6h12v1.5h-12zM1836 198.6h2v1.5h-2zM1839 198.6h11v1.5h-11zM1806 202.6h8v1.5h-8zM1815 202.6h2v1.5h-2zM1818 202.6h4v1.5h-4zM1823 202.6h5v1.5h-5zM1829 202.6h2v1.5h-2zM1832 202.6h11v1.5h-11zM1844 202.6h9v1.5h-9zM1820 214.6h8v1.5h-8zM1829 214.6h5v1.5h-5zM1826 216.6h10v1.5h-10zM1837 216.6h6v1.5h-6zM1811 218.6h6v1.5h-6zM1818 218.6h13v1.5h-13zM1832 218.6h8v1.5h-8zM1841 218.6h3v1.5h-3zM1845 218.6h15v1.5h-15zM1809 228.6h29v1.5h-29zM1802 242.6h3v1.5h-3zM1806 242.6h4v1.5h-4zM1811 242.6h5v1.5h-5zM1817 242.6h2v1.5h-2zM1820 242.6h3v1.5h-3zM1824 242.6h3v1.5h-3zM1828 242.6h6v1.5h-6zM1792 248.6h3v1.5h-3zM1792 250.6h1v1.5h-1zM1794 250.6h4v1.5h-4zM1799 250.6h6v1.5h-6zM1806 250.6h2v1.5h-2zM1809 250.6h3v1.5h-3zM1813 250.6h5v1.5h-5zM1819 250.6h10v1.5h-10zM1830 250.6h4v1.5h-4zM1835 250.6h5v1.5h-5zM1841 250.6h2v1.5h-2zM1844 250.6h4v1.5h-4zM1849 250.6h2v1.5h-2zM1852 250.6h6v1.5h-6zM1859 250.6h6v1.5h-6zM1792 252.6h3v1.5h-3zM1796 252.6h6v1.5h-6zM1803 252.6h3v1.5h-3zM1807 252.6h2v1.5h-2zM1810 252.6h14v1.5h-14zM1796 254.6h12v1.5h-12zM1809 254.6h1v1.5h-1zM1811 254.6h12v1.5h-12zM1824 254.6h6v1.5h-6zM1796 256.6h8v1.5h-8zM1805 256.6h1v1.5h-1zM1807 256.6h10v1.5h-10zM1818 256.6h9v1.5h-9zM1796 258.6h13v1.5h-13zM1810 258.6h1v1.5h-1zM1812 258.6h14v1.5h-14zM1827 258.6h7v1.5h-7zM1796 260.6h7v1.5h-7zM1804 260.6h1v1.5h-1zM1806 260.6h15v1.5h-15zM1822 260.6h8v1.5h-8zM1831 260.6h3v1.5h-3zM1835 260.6h15v1.5h-15zM1796 264.6h15v1.5h-15zM1812 264.6h5v1.5h-5zM1818 264.6h2v1.5h-2zM1821 264.6h10v1.5h-10zM1832 264.6h3v1.5h-3zM1836 264.6h19v1.5h-19zM1796 266.6h11v1.5h-11zM1800 268.6h18v1.5h-18zM1800 270.6h16v1.5h-16zM1800 272.6h19v1.5h-19zM1800 274.6h24v1.5h-24zM1800 276.6h23v1.5h-23zM1796 278.6h1v1.5h-1zM1796 280.6h1v1.5h-1zM1798 280.6h3v1.5h-3zM1802 280.6h1v1.5h-1zM1804 280.6h5v1.5h-5zM1810 280.6h2v1.5h-2zM1813 280.6h5v1.5h-5zM1819 280.6h5v1.5h-5zM1825 280.6h7v1.5h-7zM1833 280.6h2v1.5h-2zM1836 280.6h4v1.5h-4zM1841 280.6h6v1.5h-6zM1848 280.6h1v1.5h-1zM1850 280.6h8v1.5h-8zM1796 282.6h13v1.5h-13zM1792 284.6h3v1.5h-3zM1798 286.6h6v1.5h-6zM1805 286.6h7v1.5h-7zM1813 286.6h7v1.5h-7zM1821 286.6h9v1.5h-9zM1831 286.6h3v1.5h-3zM1835 286.6h3v1.5h-3zM1839 286.6h7v1.5h-7zM1798 292.6h6v1.5h-6zM1805 292.6h5v1.5h-5zM1811 292.6h2v1.5h-2zM1814 292.6h8v1.5h-8z"/><path fill="#d4d4d4" d="M1799 110.6h6v1.5h-6zM1809 110.6h2v1.5h-2zM1799 112.6h7v1.5h-7zM1797 114.6h15v1.5h-15zM1820 114.6h8v1.5h-8zM1799 116.6h4v1.5h-4zM1792 122.6h11v1.5h-11zM1804 122.6h1v1.5h-1zM1792 124.6h9v1.5h-9zM1802 124.6h1v1.5h-1zM1804 124.6h3v1.5h-3zM1792 126.6h12v1.5h-12zM1805 126.6h1v1.5h-1zM1792 128.6h14v1.5h-14zM1807 128.6h1v1.5h-1zM1792 134.6h8v1.5h-8zM1801 134.6h1v1.5h-1zM1795 140.6h1v1.5h-1zM1796 142.6h2v1.5h-2zM1799 142.6h1v1.5h-1zM1801 142.6h21v1.5h-21zM1796 144.6h6v1.5h-6zM1844 144.6h1v1.5h-1zM1799 146.6h9v1.5h-9zM1812 146.6h2v1.5h-2zM1796 148.6h6v1.5h-6zM1836 148.6h1v1.5h-1zM1796 150.6h6v1.5h-6zM1792 156.6h16v1.5h-16zM1809 156.6h1v1.5h-1zM1811 156.6h1v1.5h-1zM1826 156.6h1v1.5h-1zM1843 156.6h1v1.5h-1zM1862 156.6h1v1.5h-1zM1799 158.6h7v1.5h-7zM1810 158.6h10v1.5h-10zM1825 158.6h3v1.5h-3zM1832 158.6h18v1.5h-18zM1796 160.6h6v1.5h-6zM1858 160.6h1v1.5h-1zM1796 162.6h6v1.5h-6zM1796 172.6h20v1.5h-20zM1817 172.6h8v1.5h-8zM1826 172.6h5v1.5h-5zM1832 172.6h11v1.5h-11zM1844 172.6h10v1.5h-10zM1799 174.6h1v1.5h-1zM1800 178.6h3v1.5h-3zM1804 178.6h1v1.5h-1zM1806 178.6h14v1.5h-14zM1800 180.6h4v1.5h-4zM1813 180.6h1v1.5h-1zM1815 180.6h1v1.5h-1zM1817 180.6h7v1.5h-7zM1800 182.6h4v1.5h-4zM1810 182.6h1v1.5h-1zM1812 182.6h1v1.5h-1zM1814 182.6h10v1.5h-10zM1800 184.6h4v1.5h-4zM1808 184.6h1v1.5h-1zM1810 184.6h1v1.5h-1zM1812 184.6h8v1.5h-8zM1805 190.6h25v1.5h-25zM1831 190.6h10v1.5h-10zM1845 190.6h7v1.5h-7zM1804 192.6h17v1.5h-17zM1804 194.6h24v1.5h-24zM1829 194.6h9v1.5h-9zM1804 196.6h27v1.5h-27zM1832 196.6h9v1.5h-9zM1842 196.6h16v1.5h-16zM1804 198.6h6v1.5h-6zM1850 198.6h1v1.5h-1zM1803 200.6h9v1.5h-9zM1816 200.6h2v1.5h-2zM1800 202.6h6v1.5h-6zM1853 202.6h1v1.5h-1zM1799 210.6h9v1.5h-9zM1796 212.6h8v1.5h-8zM1805 212.6h1v1.5h-1zM1807 212.6h10v1.5h-10zM1796 214.6h12v1.5h-12zM1809 214.6h1v1.5h-1zM1811 214.6h9v1.5h-9zM1834 214.6h1v1.5h-1zM1796 216.6h18v1.5h-18zM1815 216.6h1v1.5h-1zM1817 216.6h9v1.5h-9zM1843 216.6h1v1.5h-1zM1796 218.6h12v1.5h-12zM1809 218.6h1v1.5h-1zM1796 224.6h11v1.5h-11zM1800 228.6h9v1.5h-9zM1838 228.6h1v1.5h-1zM1800 230.6h21v1.5h-21zM1800 232.6h24v1.5h-24zM1800 234.6h24v1.5h-24zM1800 236.6h23v1.5h-23zM1796 238.6h1v1.5h-1zM1796 240.6h1v1.5h-1zM1796 242.6h6v1.5h-6zM1834 242.6h1v1.5h-1zM1792 286.6h6v1.5h-6zM1846 286.6h1v1.5h-1zM1792 292.6h6v1.5h-6zM1822 292.6h1v1.5h-1z"/><path fill="#b5cea8" d=""/></g></svg></div>
<div id="panel" class="abs">
  <span class="ptab" style="left:24px">PROBLEMS</span>
  <span class="ptab" style="left:117px">OUTPUT</span>
  <span class="ptab" style="left:195.5px">DEBUG CONSOLE</span>
  <span class="ptab" style="left:327px;color:#e7e7e7">TERMINAL</span>
  <div class="abs" style="left:324px;top:34px;width:67px;height:1.3px;background:#e7e7e7"></div>
  <span class="ptab" style="left:417px">PORTS</span>
  <svg class="abs" style="left:1510px;top:8px" width="147" height="26" viewBox="0 0 147 26">
    <path d="M14 5 V21 M6 13 H22" stroke="#cccccc" stroke-width="1.6"/>
    <path d="M28.5 11.5 L32.5 15.5 L36.5 11.5" stroke="#cccccc" stroke-width="1.2" fill="none"/>
    <circle cx="52.5" cy="13.5" r="1.4" fill="#cccccc"/><circle cx="58.5" cy="13.5" r="1.4" fill="#cccccc"/><circle cx="64.5" cy="13.5" r="1.4" fill="#cccccc"/>
    <path d="M83 16 L89 10 L95 16" stroke="#cccccc" stroke-width="1.4" fill="none"/>
    <path d="M114.5 8 L125.5 19 M125.5 8 L114.5 19" stroke="#cccccc" stroke-width="1.5"/>
  </svg>
  <div class="abs term" style="left:24px;top:51.5px">Mit freundlichen Grüßen,

Damilare Adekeye

PS C:\Users\Aorus15\Desktop\PropertyVisualizer&gt; &amp; <span style="color:#2aaade">"C:/Program Files/Python313/python.exe"</span> c:/Users/Aorus15/Desktop/PropertyVisualizer/send_emails.py
Loaded 20 emails from C:/Users/Aorus15/Desktop/PropertyVisualizer/generated_emails.csv
Email sent successfully to adekeyedamilarelekan@gmail.com
Press Enter to exit...<span style="display:inline-block;width:9px;height:21px;background:#cccccc;vertical-align:top;position:relative;top:-3px"></span></div>
  <!-- terminal scrollbar / tabs -->
  <div class="abs" style="left:1497px;top:50px;width:1px;height:336px;background:#3a3a3a"></div>
  <div class="abs" style="left:1498px;top:49.5px;width:16px;height:1px;background:#3a3a3a"></div>
  <div class="abs" style="left:1514px;top:42px;width:1px;height:344px;background:#3a3a3a"></div>
  <div class="abs" style="left:1498px;top:50px;width:5px;height:4px;background:#2b96d0"></div>
  <div class="abs" style="left:1498px;top:147px;width:5px;height:5px;background:#2b96d0"></div>
  <div class="abs" style="left:1498px;top:226px;width:5px;height:5px;background:#2b96d0"></div>
  <div class="abs" style="left:1498px;top:274px;width:5px;height:5px;background:#2b96d0"></div>
  <div class="abs" style="left:1498px;top:346px;width:5px;height:6px;background:#5a5a5a"></div>
  <div class="abs" style="left:1515px;top:68px;width:142px;height:27px;background:#37373d"></div>
  <svg class="abs" style="left:1526px;top:45px" width="20" height="20" viewBox="0 0 20 20"><path d="M2.5 2.5 h16 l-1 15 h-16 z" stroke="#cccccc" stroke-width="1.3" fill="none" stroke-linejoin="round"/><path d="M5 6.5 L9 9 L5 11.5 M9.5 13.5 h5" stroke="#cccccc" stroke-width="1.3" fill="none"/></svg>
  <span class="abs" style="left:1550px;top:45px;font-size:15px;color:#cccccc">pwsh</span>
  <svg class="abs" style="left:1527px;top:72px" width="20" height="20" viewBox="0 0 20 20"><rect x="1.5" y="1.5" width="16" height="16" rx="1.5" stroke="#cccccc" stroke-width="1.3" fill="none"/><path d="M4.5 6 L8.5 9 L4.5 12 M9 14 h5.5" stroke="#cccccc" stroke-width="1.3" fill="none"/></svg>
  <span class="abs" style="left:1550px;top:72px;font-size:15.5px;color:#cccccc">Python</span>
</div>
<div id="status" class="abs">
  <div class="abs" style="left:0;top:0;width:41px;height:27px;background:#16825d"></div>
  <svg class="abs" style="left:0;top:0" width="41" height="27" viewBox="0 1006 41 27"><path d="M15.1 1014.1 L20.6 1019.1 L15.1 1023.5 M25.5 1010.2 L21.1 1014.9 L25.5 1019.9" stroke="#ffffff" stroke-width="1.4" fill="none"/></svg>
  <svg class="abs" style="left:41px;top:0" width="46" height="27" viewBox="41 1006 46 27">
    <g stroke="#ffffff" stroke-width="1.4" fill="none" stroke-linejoin="round" stroke-linecap="round">
      <path d="M55.3 1020.2 C56.5 1016 59.5 1012.2 66.3 1010.7 C65 1017.5 61.2 1020.5 57 1021.9 Z"/>
      <path d="M57.2 1015.5 L54.2 1015.8 L52 1018.5 L55.3 1019.6 M57.8 1021.6 L58.5 1024.6 L61.2 1022.6 L61.5 1019.8"/>
      <path d="M51.8 1021.5 v3 h3"/>
      <circle cx="73.3" cy="1019.6" r="2.6"/>
      <path d="M70.8 1022.2 L69.5 1023.5 M75.2 1017.7 L76.7 1016.2 M76.7 1016.2 L79.8 1013.1 a2.5 2.5 0 0 1 3.5 0 v0 a2.5 2.5 0 0 1 0 3.5 L80.2 1019.6 Z M81.9 1012.1 L83.2 1010.8"/>
    </g>
    <circle cx="61.8" cy="1015.2" r="1.2" fill="#fff"/>
  </svg>
  <span class="st" style="left:88px">Launchpad</span>
  <svg class="abs" style="left:176px;top:6px" width="64" height="16" viewBox="0 0 64 16">
    <circle cx="8" cy="7.5" r="6.3" stroke="#fff" stroke-width="1.2" fill="none"/>
    <path d="M5.3 4.8 L10.7 10.2 M10.7 4.8 L5.3 10.2" stroke="#fff" stroke-width="1.2"/>
    <path d="M40 1.5 L46.5 13.5 H33.5 Z" stroke="#fff" stroke-width="1.2" fill="none" stroke-linejoin="round"/>
    <path d="M40 5.5 v4 M40 11 v1" stroke="#fff" stroke-width="1.3"/>
  </svg>
  <span class="st" style="left:197px">0</span>
  <span class="st" style="left:229.5px">0</span>
  <svg class="abs" style="left:257px;top:5px" width="17" height="16" viewBox="0 0 17 16"><path d="M1.5 8 L8.5 1.5 L15.5 8 M3.5 6.5 V14.5 H6.5 V10 H10.5 V14.5 H13.5 V6.5" stroke="#fff" stroke-width="1.3" fill="none" stroke-linejoin="round"/></svg>
  <svg class="abs" style="left:294px;top:5px" width="14" height="17" viewBox="0 0 14 17"><ellipse cx="7" cy="3.5" rx="5" ry="2" stroke="#fff" stroke-width="1.2" fill="none"/><path d="M2 3.5 V13 C2 14.2 4.2 15.2 7 15.2 S12 14.2 12 13 V3.5" stroke="#fff" stroke-width="1.2" fill="none"/></svg>
  <span class="st" style="left:313.5px">Connect</span>
  <div class="abs" style="left:376px;top:0;width:169.5px;height:27px;background:#c8321a"></div>
  <svg class="abs" style="left:387px;top:5px" width="18" height="17" viewBox="0 0 18 17"><circle cx="9" cy="7.5" r="6.3" stroke="#fff" stroke-width="1.2" fill="none"/><path d="M6.3 4.8 L11.7 10.2 M11.7 4.8 L6.3 10.2" stroke="#fff" stroke-width="1.2"/></svg>
  <span class="st" style="left:409px">AWS: profile:default</span>

  <div class="abs" style="left:1110px;top:0;width:41px;height:27px;background:#084a80"></div>
  <svg class="abs" style="left:1120px;top:4px" width="22" height="18" viewBox="0 0 22 18"><circle cx="9" cy="7.5" r="6" stroke="#fff" stroke-width="1.4" fill="none"/><path d="M13.3 11.8 L19 17.5 M6 7.5 h6 M9 4.5 v6" stroke="#fff" stroke-width="1.4"/></svg>
  <span class="st" style="left:1161px;letter-spacing:-0.08px">Ln 45, Col 36 (15 selected)</span>
  <span class="st" style="left:1346px;letter-spacing:-0.35px">Spaces: 4</span>
  <span class="st" style="left:1424px;letter-spacing:-0.3px">UTF-8</span>
  <span class="st" style="left:1481px;letter-spacing:-1px">CRLF</span>
  <svg class="abs" style="left:1532px;top:5px" width="18" height="18" viewBox="0 0 18 18"><path d="M5 1.5 c-2 0 -2 1 -2 2.5 v2.5 c0 1 -.7 1.7 -1.7 1.7 c1 0 1.7 .7 1.7 1.7 v2.5 c0 1.5 0 2.5 2 2.5 M13 1.5 c2 0 2 1 2 2.5 v1.5" stroke="#fff" stroke-width="1.2" fill="none"/><circle cx="12" cy="12" r="3.3" stroke="#fff" stroke-width="1.2" fill="none"/><path d="M10.5 10.5 l3 3 M13.5 10.5 l-3 3" stroke="#fff" stroke-width="1"/></svg>
  <span class="st" style="left:1557px">Python</span>
  <svg class="abs" style="left:1617px;top:3px" width="24" height="22" viewBox="0 0 24 22">
    <g stroke="#ffffff" fill="none">
      <circle cx="9.3" cy="6.5" r="3.1" stroke-width="1.6"/>
      <circle cx="15.7" cy="6.5" r="3.1" stroke-width="1.6"/>
      <path d="M6.5 10 c-2.3 .5 -3.3 2.3 -3.3 4.2 c0 2.8 3.8 4.5 9.3 4.5 s9.3 -1.7 9.3 -4.5 c0 -1.9 -1 -3.7 -3.3 -4.2" stroke-width="1.7"/>
    </g>
    <path d="M10 12.3 h1.3 v3 h-1.3z M13.7 12.3 h1.3 v3 h-1.3z" fill="#ffffff"/>
  </svg>
  <span class="st" style="left:1655px">3.13.0</span>
  <svg class="abs" style="left:1711px;top:4px" width="18" height="19" viewBox="0 0 18 19"><circle cx="9" cy="7" r="1.8" fill="#fff"/><path d="M6 10.5 a4.5 4.5 0 1 1 6 0 M4 12.5 a7 7 0 1 1 10 0 M9 9 v9" stroke="#fff" stroke-width="1.3" fill="none"/></svg>
  <span class="st" style="left:1733px">Go Live</span>
  <svg class="abs" style="left:1798px;top:5px" width="18" height="17" viewBox="0 0 18 17"><circle cx="9" cy="8" r="6.5" stroke="#fff" stroke-width="1.3" fill="none"/><path d="M4.5 12.5 L13.5 3.5" stroke="#fff" stroke-width="1.3"/></svg>
  <span class="st" style="left:1820px">Prettier</span>
  <svg class="abs" style="left:1883px;top:4px" width="22" height="19" viewBox="0 0 22 19"><path d="M4 14 h12 l-1.5 -2 v-4.5 a4.5 4.5 0 0 0 -9 0 v4.5 z M8 16 a2 2 0 0 0 4 0" stroke="#fff" stroke-width="1.3" fill="none" stroke-linejoin="round"/><circle cx="16" cy="4" r="3" fill="#fff"/></svg>
</div>

</body></html>
